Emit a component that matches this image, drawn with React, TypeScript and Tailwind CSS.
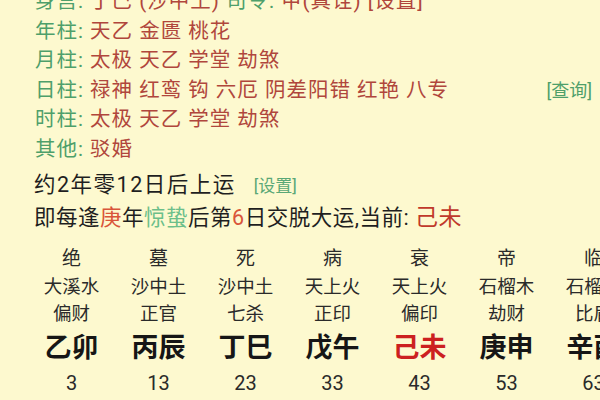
const pillars = [
  { label: "年柱", items: ["天乙", "金匮", "桃花"] },
  { label: "月柱", items: ["太极", "天乙", "学堂", "劫煞"] },
  { label: "日柱", items: ["禄神", "红鸾", "钩", "六厄", "阴差阳错", "红艳", "八专"], query: true },
  { label: "时柱", items: ["太极", "天乙", "学堂", "劫煞"] },
  { label: "其他", items: ["驳婚"] },
];

const dayun = [
  { stage: "绝", nayin: "大溪水", god: "偏财", gz: "乙卯", age: 3 },
  { stage: "墓", nayin: "沙中土", god: "正官", gz: "丙辰", age: 13 },
  { stage: "死", nayin: "沙中土", god: "七杀", gz: "丁巳", age: 23 },
  { stage: "病", nayin: "天上火", god: "正印", gz: "戊午", age: 33 },
  { stage: "衰", nayin: "天上火", god: "偏印", gz: "己未", age: 43, current: true },
  { stage: "帝", nayin: "石榴木", god: "劫财", gz: "庚申", age: 53 },
  { stage: "临", nayin: "石榴木", god: "比肩", gz: "辛酉", age: 63 },
];

export default function App() {
  return (
    <div className="h-[400px] w-[600px] overflow-hidden bg-[#fdf9cf] font-['Roboto','Noto_Sans_CJK_SC',sans-serif]">
      {/* 神煞 */}
      <div className="-mt-[13px] pl-[35px] text-[20.5px] leading-[29.5px] tracking-[1px]">
        <div className="whitespace-nowrap">
          <span className="text-[#4e9f6a]">身宫: </span>
          <span className="text-[#b0463c]">丁巳 (沙中土) </span>
          <span className="text-[#4e9f6a]">司令: </span>
          <span className="text-[#b0463c]">甲(真诠) [设置]</span>
        </div>
        {pillars.map((p) => (
          <div key={p.label} className="flex items-center justify-between pr-[8px]">
            <div className="whitespace-nowrap">
              <span className="text-[#4e9f6a]">{p.label}: </span>
              <span className="text-[#b0463c]">{p.items.join(" ")}</span>
            </div>
            {p.query && (
              <span className="text-[18px] tracking-normal text-[#4e9f6a]">[查询]</span>
            )}
          </div>
        ))}
      </div>

      {/* 起运 */}
      <div className="mt-[5px] pl-[34px] text-[21.5px] leading-[32px] text-[#1f1f1f]">
        <div className="whitespace-nowrap tracking-[1.5px]">
          约2年零12日后上运
          <span className="ml-[18px] text-[17px] tracking-normal text-[#5aa877]">[设置]</span>
        </div>
        <div className="whitespace-nowrap tracking-[0.5px]">
          即每逢<span className="text-[#d9553a]">庚</span>年
          <span className="text-[#6cbf8a]">惊蛰</span>后第
          <span className="text-[#d9553a]">6</span>日交脱大运,当前:{" "}
          <span className="text-[23px] text-[#c0392b]">己未</span>
        </div>
      </div>

      {/* 大运 */}
      <div className="mt-[10px] flex pl-[28px]">
        {dayun.map((d) => (
          <div key={d.age} className="flex w-[87px] shrink-0 flex-col items-center text-[#2a2a2a]">
            <div className="text-[19px] leading-[29px]">{d.stage}</div>
            <div className="whitespace-nowrap text-[18.5px] leading-[28px]">{d.nayin}</div>
            <div className="text-[18.5px] leading-[26px]">{d.god}</div>
            <div
              className={
                d.current
                  ? "text-[27px] font-bold leading-[42px] text-[#cc2020]"
                  : "text-[27px] font-bold leading-[42px] text-[#161616]"
              }
            >
              {d.gz}
            </div>
            <div className="text-[20px] leading-[28px]">{d.age}</div>
          </div>
        ))}
      </div>
    </div>
  );
}
